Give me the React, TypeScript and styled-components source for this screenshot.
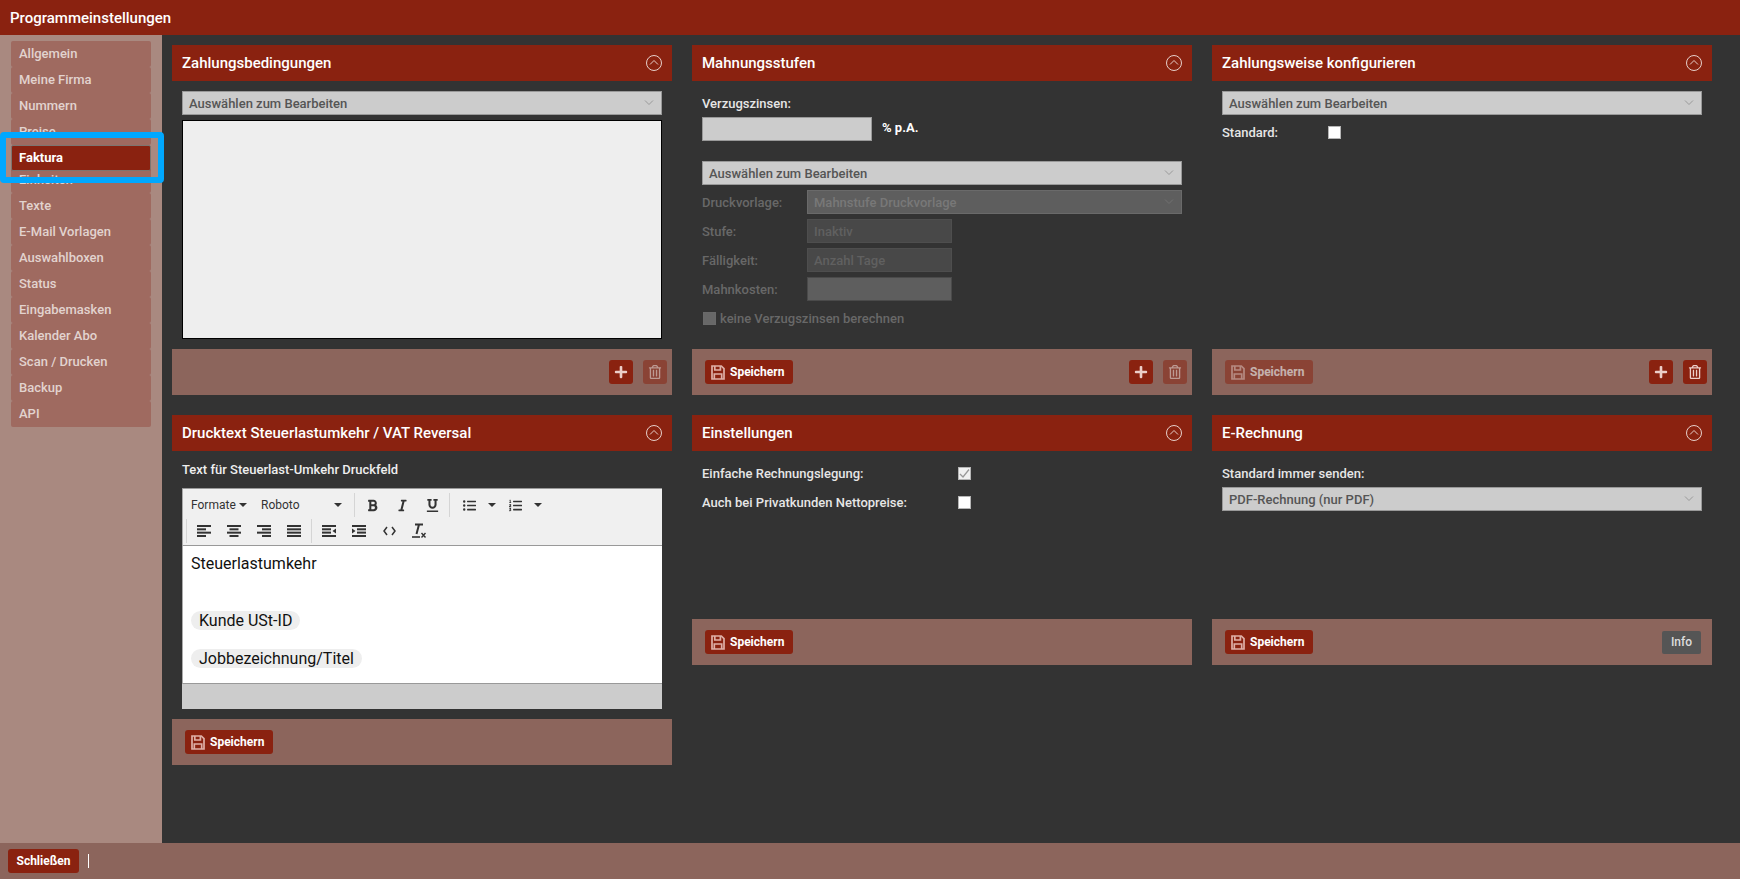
import styled, { createGlobalStyle } from "styled-components";
import { FaRegTrashAlt, FaPlus, FaBold, FaItalic, FaUnderline, FaListUl, FaListOl } from "react-icons/fa";

const menuItems = [
  "Allgemein",
  "Meine Firma",
  "Nummern",
  "Preise",
  "Faktura",
  "Einheiten",
  "Texte",
  "E-Mail Vorlagen",
  "Auswahlboxen",
  "Status",
  "Eingabemasken",
  "Kalender Abo",
  "Scan / Drucken",
  "Backup",
  "API",
];

const GlobalStyle = createGlobalStyle`
  html, body {
    margin: 0;
    height: 100%;
    overflow: hidden;
    background: #333;
    font-family: Roboto, "Liberation Sans", sans-serif;
  }
  * {
    box-sizing: border-box;
  }
`;

const Page = styled.div`
  display: flex;
  flex-direction: column;
  height: 100vh;
`;

const TitleBar = styled.header`
  display: flex;
  align-items: center;
  flex: 0 0 35px;
  padding-left: 10px;
  background: #8a2210;
  color: #fff;
  font-size: 15px;
  font-weight: 500;
`;

const Middle = styled.div`
  display: flex;
  flex: 1;
  min-height: 0;
`;

const Sidebar = styled.nav`
  position: relative;
  flex: 0 0 162px;
  padding: 6px 11px;
  background: #a98980;
`;

const MenuItem = styled.div<{ $active?: boolean }>`
  position: relative;
  z-index: ${(p) => (p.$active ? 1 : 0)};
  height: 26px;
  margin-bottom: ${(p) => (p.$active ? "-4px" : "0")};
  padding-left: ${(p) => (p.$active ? "7px" : "8px")};
  line-height: ${(p) => (p.$active ? "24px" : "26px")};
  font-size: 13px;
  font-weight: ${(p) => (p.$active ? 700 : 500)};
  color: ${(p) => (p.$active ? "#fff" : "#e2d3cf")};
  background: ${(p) => (p.$active ? "#8a2210" : "#9f6a60")};
  border: ${(p) => (p.$active ? "1px solid #7d7570" : "none")};
  border-radius: 2px;
`;

const Highlight = styled.div`
  position: absolute;
  z-index: 2;
  top: 97px;
  left: 0;
  width: 164px;
  height: 51px;
  border: 6px solid #00a8ff;
  border-radius: 4px;
`;

const Main = styled.main`
  flex: 1;
  display: grid;
  grid-template-columns: repeat(3, 500px);
  grid-auto-rows: max-content;
  gap: 20px;
  padding: 10px;
  background: #333;
`;

const Panel = styled.section<{ $height: number }>`
  display: flex;
  flex-direction: column;
  height: ${(p) => p.$height}px;
`;

const PanelHeader = styled.div`
  display: flex;
  align-items: center;
  justify-content: space-between;
  flex: 0 0 36px;
  padding: 0 10px;
  background: #8a2210;
  color: #fff;
  font-size: 15px;
  font-weight: 500;
`;

const PanelBody = styled.div`
  flex: 1;
  display: flex;
  flex-direction: column;
  gap: 5px;
  padding: 10px;
`;

const PanelFooter = styled.div`
  display: flex;
  align-items: center;
  gap: 10px;
  flex: 0 0 46px;
  padding: 0 5px 0 13px;
  background: #8c655c;
`;

const Spacer = styled.div`
  flex: 1;
`;

const Button = styled.button<{ $disabled?: boolean }>`
  display: inline-flex;
  align-items: center;
  gap: 5px;
  height: 24px;
  padding: 0 9px 0 6px;
  border: none;
  border-radius: 3px;
  background: #8a2210;
  color: #fff;
  font-family: inherit;
  font-size: 12px;
  font-weight: 700;
  opacity: ${(p) => (p.$disabled ? 0.5 : 1)};
`;

const SquareButton = styled(Button)`
  justify-content: center;
  width: 24px;
  padding: 0;
  svg {
    font-size: 14px;
    color: #eccfc9;
  }
`;

const InfoButton = styled.button`
  height: 23px;
  margin-right: 6px;
  padding: 0 9px;
  border: none;
  border-radius: 2px;
  background: #555;
  color: #ddd;
  font-family: inherit;
  font-size: 12px;
  font-weight: 500;
`;

const CloseButton = styled(Button)`
  width: 71px;
  justify-content: center;
  padding: 0;
`;

const SelectBox = styled.div<{ $dim?: boolean }>`
  display: flex;
  align-items: center;
  justify-content: space-between;
  flex: 1;
  height: 24px;
  min-height: 24px;
  padding: 0 7px 0 6px;
  border: 1px solid ${(p) => (p.$dim ? "#6a6a6a" : "#999")};
  background: ${(p) => (p.$dim ? "#5e5e5e" : "#ccc")};
  color: ${(p) => (p.$dim ? "#787878" : "#555")};
  font-size: 13px;
  font-weight: 500;
  svg {
    stroke: ${(p) => (p.$dim ? "#707070" : "#999")};
  }
`;

const TextPreview = styled.div`
  flex: 0 0 219px;
  border: 1px solid #000;
  background: #eee;
`;

const Row = styled.div`
  display: flex;
  align-items: center;
  height: 24px;
  flex: 0 0 24px;
`;

const FieldLabel = styled.label<{ $width?: number; $dim?: boolean }>`
  flex: ${(p) => (p.$width ? `0 0 ${p.$width}px` : "0 0 auto")};
  color: ${(p) => (p.$dim ? "#686868" : "#e6e6e6")};
  font-size: 13px;
  font-weight: 500;
`;

const TextInput = styled.input<{ $width: number; $tone: "light" | "dim" | "dark" }>`
  width: ${(p) => p.$width}px;
  height: 24px;
  padding: 0 6px;
  border: 1px solid ${(p) => ({ light: "#999", dim: "#4a4a4a", dark: "#4e4e4e" }[p.$tone])};
  background: ${(p) => ({ light: "#ccc", dim: "#5e5e5e", dark: "#484848" }[p.$tone])};
  font-family: inherit;
  font-size: 13px;
  font-weight: 500;
  &::placeholder {
    color: #606060;
    opacity: 1;
  }
`;

const Unit = styled.span`
  margin: -4px 0 0 10px;
  color: #fff;
  font-size: 13px;
  font-weight: 700;
`;

const StackedRow = styled(Row)`
  margin-top: -3px;
`;

const SelectGap = styled.div`
  flex: 0 0 10px;
`;

const CheckBox = styled.span<{ $tone?: "white" | "dim" | "checked" }>`
  display: inline-flex;
  align-items: center;
  justify-content: center;
  flex: 0 0 13px;
  width: 13px;
  height: 13px;
  border: 1px solid ${(p) => (p.$tone === "dim" ? "#6a6a6a" : "#b5b5b5")};
  background: ${(p) => (p.$tone === "dim" ? "#686868" : p.$tone === "checked" ? "#f0f0f0" : "#fff")};
`;

const DimCheckBox = styled(CheckBox)`
  margin-left: 1px;
`;

const DimCheckLabel = styled(FieldLabel)`
  margin-left: 4px;
`;

const EditorCaption = styled.div`
  height: 17px;
  margin-bottom: 5px;
  line-height: 17px;
  color: #eee;
  font-size: 13px;
  font-weight: 500;
`;

const Editor = styled.div`
  flex: 0 0 221px;
  display: flex;
  flex-direction: column;
  border-top: 1px solid #999;
`;

const Toolbar = styled.div`
  flex: 0 0 57px;
  padding-top: 3px;
  background: #f0f0f0;
  border-left: 1px solid #aaa;
  border-bottom: 1px solid #999;
`;

const ToolRow = styled.div<{ $indent?: number }>`
  display: flex;
  align-items: center;
  height: 26px;
  padding-left: ${(p) => p.$indent ?? 0}px;
  color: #333;
`;

const ToolSelect = styled.div<{ $width: number }>`
  display: flex;
  align-items: center;
  justify-content: space-between;
  width: ${(p) => p.$width}px;
  height: 24px;
  padding: 0 6px 0 8px;
  font-size: 12px;
  color: #333;
`;

const WideToolSelect = styled(ToolSelect)`
  padding-right: 10px;
`;

const Caret = styled.span`
  display: inline-block;
  flex: 0 0 auto;
  width: 0;
  height: 0;
  border-left: 4px solid transparent;
  border-right: 4px solid transparent;
  border-top: 4px solid #333;
`;

const ToolSep = styled.span`
  flex: 0 0 1px;
  height: 24px;
  margin: 0 2px;
  background: #d5d5d5;
`;

const ToolButton = styled.span`
  display: inline-flex;
  align-items: center;
  justify-content: center;
  width: 30px;
  height: 24px;
  color: #333;
  font-size: 13px;
`;

const CaretSlot = styled.span`
  display: inline-flex;
  justify-content: center;
  width: 16px;
`;

const ListGap = styled.span`
  flex: 0 0 2px;
`;

const EditorContent = styled.div`
  flex: 1;
  padding: 8px 8px;
  background: #fff;
  border-left: 1px solid #aaa;
  border-bottom: 1px solid #999;
  color: #111;
  font-size: 16px;
  line-height: 19px;
`;

const EditorLine = styled.div<{ $gap: number }>`
  margin-bottom: ${(p) => p.$gap}px;
`;

const Chip = styled.span`
  display: inline-block;
  padding: 0 8px;
  border-radius: 10px;
  background: #eee;
`;

const StatusBar = styled.div`
  flex: 0 0 25px;
  background: #ccc;
`;

const BottomBar = styled.footer`
  display: flex;
  align-items: center;
  flex: 0 0 36px;
  padding-left: 8px;
  background: #8c655c;
`;

const BarDivider = styled.span`
  width: 1px;
  height: 14px;
  margin-left: 9px;
  background: #fff;
`;

function CollapseIcon() {
  return (
    <svg width="16" height="16" viewBox="0 0 16 16" fill="none" stroke="#e6cfca" strokeWidth="1">
      <circle cx="8" cy="8" r="7.5" />
      <polyline points="4,9.5 8,5.5 12,9.5" />
    </svg>
  );
}

function SelectArrow() {
  return (
    <svg width="10" height="6" viewBox="0 0 10 6" fill="none" strokeWidth="1">
      <polyline points="1,0.5 5,4.5 9,0.5" />
    </svg>
  );
}

function CheckMark() {
  return (
    <svg width="11" height="11" viewBox="0 0 11 11" fill="none" stroke="#999" strokeWidth="1.3">
      <polyline points="1,6 4,9 10,1.5" />
    </svg>
  );
}

function SaveIcon() {
  return (
    <svg width="14" height="15" viewBox="0 0 14 15" fill="none" stroke="#dfb0a7" strokeWidth="1.7">
      <path d="M1 1h9.3L13 3.7V14H1z" />
      <path d="M3.8 1v4h5.6V1" />
      <path d="M3.3 14V9h7.4v5" />
    </svg>
  );
}

// bars of the align buttons: [x, width] from top to bottom
const alignBars: Record<string, number[][]> = {
  left: [[0, 14], [0, 9], [0, 14], [0, 9]],
  center: [[0, 14], [2.5, 9], [0, 14], [2.5, 9]],
  right: [[0, 14], [5, 9], [0, 14], [5, 9]],
  justify: [[0, 14], [0, 14], [0, 14], [0, 14]],
};

function AlignIcon({ kind }: { kind: string }) {
  return (
    <svg width="14" height="12" viewBox="0 0 14 12" fill="#333">
      {alignBars[kind].map(([x, w], i) => (
        <rect key={i} x={x} y={i * 3.33} width={w} height="2" />
      ))}
    </svg>
  );
}

function IndentIcon({ outdent }: { outdent?: boolean }) {
  return (
    <svg width="14" height="12" viewBox="0 0 14 12" fill="#333">
      <rect x="0" y="0" width="14" height="2" />
      <rect x="0" y="10" width="14" height="2" />
      <rect x={outdent ? 0 : 5} y="3.3" width="9" height="2" />
      <rect x={outdent ? 0 : 5} y="6.6" width="9" height="2" />
      <polygon points={outdent ? "14,3.5 14,8.5 10.5,6" : "0,3.5 0,8.5 3.5,6"} />
    </svg>
  );
}

function CodeIcon() {
  return (
    <svg width="13" height="10" viewBox="0 0 13 10" fill="none" stroke="#333" strokeWidth="1.5">
      <polyline points="4,1 1,5 4,9" />
      <polyline points="9,1 12,5 9,9" />
    </svg>
  );
}

function ClearFormatIcon() {
  return (
    <svg width="16" height="16" viewBox="0 0 16 16" fill="none" stroke="#333">
      <path d="M4 1.5h8M8 1.5L5.5 11" strokeWidth="2" />
      <path d="M1 14h8" strokeWidth="1.6" />
      <path d="M10.5 10l4 4.5M14.5 10l-4 4.5" strokeWidth="1.4" />
    </svg>
  );
}

function SaveButton({ disabled }: { disabled?: boolean }) {
  return (
    <Button $disabled={disabled}>
      <SaveIcon />
      Speichern
    </Button>
  );
}

function PanelTitle({ title }: { title: string }) {
  return (
    <PanelHeader>
      {title}
      <CollapseIcon />
    </PanelHeader>
  );
}

function EditSelect({ text = "Auswählen zum Bearbeiten", dim }: { text?: string; dim?: boolean }) {
  return (
    <SelectBox $dim={dim}>
      {text}
      <SelectArrow />
    </SelectBox>
  );
}

function AddDelete({ deleteDisabled }: { deleteDisabled?: boolean }) {
  return (
    <>
      <Spacer />
      <SquareButton>
        <FaPlus />
      </SquareButton>
      <SquareButton $disabled={deleteDisabled}>
        <FaRegTrashAlt />
      </SquareButton>
    </>
  );
}

export default function App() {
  return (
    <Page>
      <GlobalStyle />
      <TitleBar>Programmeinstellungen</TitleBar>
      <Middle>
        <Sidebar>
          {menuItems.map((item) => (
            <MenuItem key={item} $active={item === "Faktura"}>
              {item}
            </MenuItem>
          ))}
          <Highlight />
        </Sidebar>
        <Main>
          <Panel $height={350}>
            <PanelTitle title="Zahlungsbedingungen" />
            <PanelBody>
              <Row>
                <EditSelect />
              </Row>
              <TextPreview />
            </PanelBody>
            <PanelFooter>
              <AddDelete deleteDisabled />
            </PanelFooter>
          </Panel>

          <Panel $height={350}>
            <PanelTitle title="Mahnungsstufen" />
            <PanelBody>
              <Row>
                <FieldLabel>Verzugszinsen:</FieldLabel>
              </Row>
              <StackedRow>
                <TextInput $width={170} $tone="light" />
                <Unit>% p.A.</Unit>
              </StackedRow>
              <SelectGap />
              <Row>
                <EditSelect />
              </Row>
              <Row>
                <FieldLabel $width={105} $dim>
                  Druckvorlage:
                </FieldLabel>
                <EditSelect text="Mahnstufe Druckvorlage" dim />
              </Row>
              <Row>
                <FieldLabel $width={105} $dim>
                  Stufe:
                </FieldLabel>
                <TextInput $width={145} $tone="dark" placeholder="Inaktiv" disabled />
              </Row>
              <Row>
                <FieldLabel $width={105} $dim>
                  Fälligkeit:
                </FieldLabel>
                <TextInput $width={145} $tone="dark" placeholder="Anzahl Tage" disabled />
              </Row>
              <Row>
                <FieldLabel $width={105} $dim>
                  Mahnkosten:
                </FieldLabel>
                <TextInput $width={145} $tone="dim" disabled />
              </Row>
              <Row>
                <DimCheckBox $tone="dim" />
                <DimCheckLabel $dim>keine Verzugszinsen berechnen</DimCheckLabel>
              </Row>
            </PanelBody>
            <PanelFooter>
              <SaveButton />
              <AddDelete deleteDisabled />
            </PanelFooter>
          </Panel>

          <Panel $height={350}>
            <PanelTitle title="Zahlungsweise konfigurieren" />
            <PanelBody>
              <Row>
                <EditSelect />
              </Row>
              <Row>
                <FieldLabel $width={106}>Standard:</FieldLabel>
                <CheckBox />
              </Row>
            </PanelBody>
            <PanelFooter>
              <SaveButton disabled />
              <AddDelete />
            </PanelFooter>
          </Panel>

          <Panel $height={350}>
            <PanelTitle title="Drucktext Steuerlastumkehr / VAT Reversal" />
            <PanelBody>
              <EditorCaption>Text für Steuerlast-Umkehr Druckfeld</EditorCaption>
              <Editor>
                <Toolbar>
                  <ToolRow>
                    <ToolSelect $width={70}>
                      Formate
                      <Caret />
                    </ToolSelect>
                    <WideToolSelect $width={99}>
                      Roboto
                      <Caret />
                    </WideToolSelect>
                    <ToolSep />
                    <ToolButton>
                      <FaBold />
                    </ToolButton>
                    <ToolButton>
                      <FaItalic />
                    </ToolButton>
                    <ToolButton>
                      <FaUnderline />
                    </ToolButton>
                    <ToolSep />
                    <ListGap />
                    <ToolButton>
                      <FaListUl />
                    </ToolButton>
                    <CaretSlot>
                      <Caret />
                    </CaretSlot>
                    <ToolButton>
                      <FaListOl />
                    </ToolButton>
                    <CaretSlot>
                      <Caret />
                    </CaretSlot>
                  </ToolRow>
                  <ToolRow $indent={1}>
                    <ToolSep />
                    <ToolButton>
                      <AlignIcon kind="left" />
                    </ToolButton>
                    <ToolButton>
                      <AlignIcon kind="center" />
                    </ToolButton>
                    <ToolButton>
                      <AlignIcon kind="right" />
                    </ToolButton>
                    <ToolButton>
                      <AlignIcon kind="justify" />
                    </ToolButton>
                    <ToolSep />
                    <ToolButton>
                      <IndentIcon outdent />
                    </ToolButton>
                    <ToolButton>
                      <IndentIcon />
                    </ToolButton>
                    <ToolButton>
                      <CodeIcon />
                    </ToolButton>
                    <ToolButton>
                      <ClearFormatIcon />
                    </ToolButton>
                  </ToolRow>
                </Toolbar>
                <EditorContent>
                  <EditorLine $gap={38}>Steuerlastumkehr</EditorLine>
                  <EditorLine $gap={19}>
                    <Chip>Kunde USt-ID</Chip>
                  </EditorLine>
                  <EditorLine $gap={0}>
                    <Chip>Jobbezeichnung/Titel</Chip>
                  </EditorLine>
                </EditorContent>
                <StatusBar />
              </Editor>
            </PanelBody>
            <PanelFooter>
              <SaveButton />
            </PanelFooter>
          </Panel>

          <Panel $height={250}>
            <PanelTitle title="Einstellungen" />
            <PanelBody>
              <Row>
                <FieldLabel $width={256}>Einfache Rechnungslegung:</FieldLabel>
                <CheckBox $tone="checked">
                  <CheckMark />
                </CheckBox>
              </Row>
              <Row>
                <FieldLabel $width={256}>Auch bei Privatkunden Nettopreise:</FieldLabel>
                <CheckBox />
              </Row>
            </PanelBody>
            <PanelFooter>
              <SaveButton />
            </PanelFooter>
          </Panel>

          <Panel $height={250}>
            <PanelTitle title="E-Rechnung" />
            <PanelBody>
              <Row>
                <FieldLabel>Standard immer senden:</FieldLabel>
              </Row>
              <StackedRow>
                <EditSelect text="PDF-Rechnung (nur PDF)" />
              </StackedRow>
            </PanelBody>
            <PanelFooter>
              <SaveButton />
              <Spacer />
              <InfoButton>Info</InfoButton>
            </PanelFooter>
          </Panel>
        </Main>
      </Middle>
      <BottomBar>
        <CloseButton>Schließen</CloseButton>
        <BarDivider />
      </BottomBar>
    </Page>
  );
}
